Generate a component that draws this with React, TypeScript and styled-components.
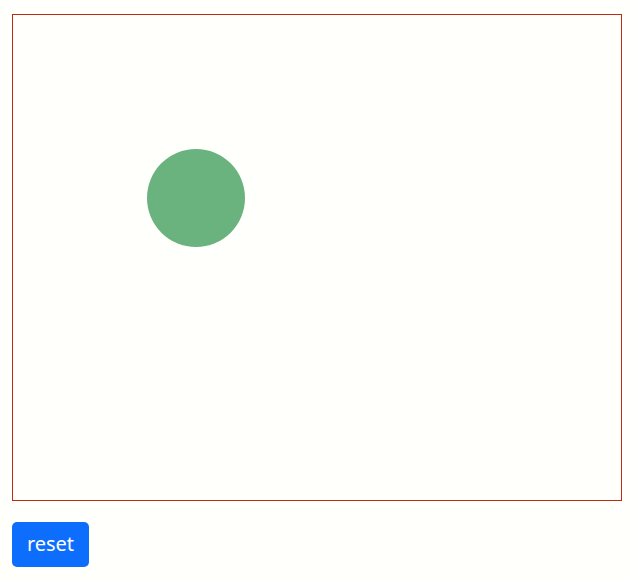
import styled, { createGlobalStyle } from 'styled-components';

const GlobalStyle = createGlobalStyle`
  html, body {
    margin: 0;
    background: #fffffb;
    font-family: "Microsoft YaHei", "Noto Sans", "Open Sans", sans-serif;
  }
`;

const ball = { x: 147, y: 149, size: 98 };

export default function App() {
  return (
    <>
      <GlobalStyle />
      <Page>
        <Stage>
          <Ball
            style={{ left: ball.x - 13, top: ball.y - 15, width: ball.size, height: ball.size }}
          />
        </Stage>
        <ResetButton type="button">reset</ResetButton>
      </Page>
    </>
  );
}

const Page = styled.div`
  padding: 14px 0 0 12px;
  display: flex;
  flex-direction: column;
  align-items: flex-start;
  gap: 21px;
`;

const Stage = styled.div`
  position: relative;
  width: 608px;
  height: 485px;
  border: 1px solid #bf2a12;
`;

const Ball = styled.div`
  position: absolute;
  border-radius: 50%;
  background: #6ab27e;
`;

const ResetButton = styled.button`
  width: 77px;
  height: 45px;
  border: none;
  border-radius: 5px;
  background: #0d6efd;
  color: #fff;
  font-family: inherit;
  font-size: 20px;
  font-weight: 400;
  padding: 0 0 2px;
  cursor: pointer;
`;
